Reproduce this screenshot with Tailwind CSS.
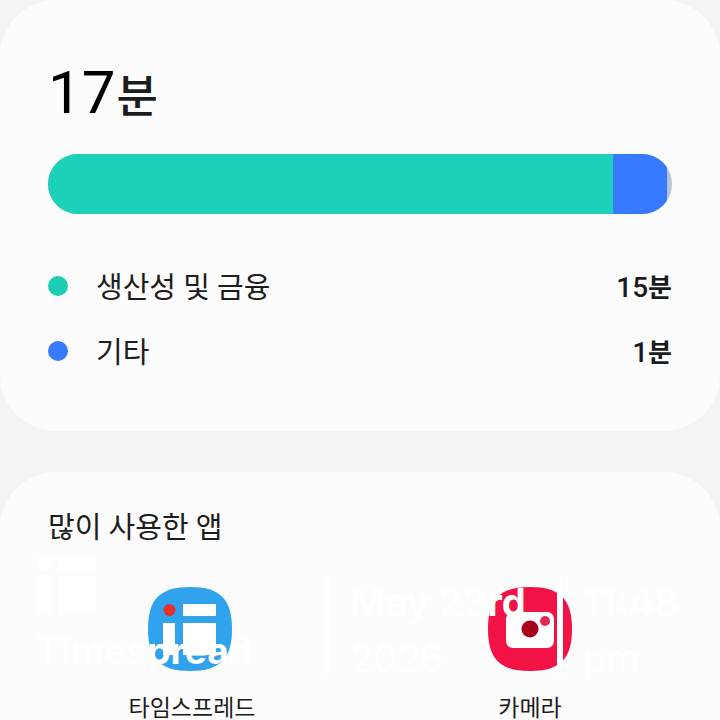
<!DOCTYPE html>
<html lang="ko">
<head>
    <meta charset="UTF-8">
    <meta name="viewport" content="width=device-width, initial-scale=1.0">
    <title>스크린 타임</title>
    <!-- Tailwind CSS CDN -->
    <script src="https://cdn.jsdelivr.net/npm/@tailwindcss/browser@4"></script>
</head>
<body class="bg-[#f4f4f7] font-['Roboto','Noto_Sans_CJK_KR',sans-serif] text-[#1c1c1c]">
    <div class="relative flex flex-col gap-[41px] h-screen overflow-hidden">
        <!-- Usage summary -->
        <main class="bg-[#fcfcfc] rounded-[56px] px-12 pt-[57px] pb-12 shrink-0">
            <h1 class="flex items-baseline text-[60px] leading-[72px] text-black">17<span class="ml-px text-[45px] font-medium text-[#1c1c1c]">분</span></h1>

            <!-- Usage bar -->
            <div class="flex h-15 mt-5 rounded-full overflow-hidden bg-[#b4c4d8]">
                <div class="bg-[#1dd0b9]" style="width: 90.6%"></div>
                <div class="bg-[#387aff]" style="width: 8.6%"></div>
            </div>

            <!-- Categories -->
            <ul class="mt-[39px]">
                <li class="flex items-center h-[65px]">
                    <span class="size-5 rounded-full bg-[#1dcdb3]"></span>
                    <span class="ml-7 pt-1 text-[29px] leading-10">생산성 및 금융</span>
                    <span class="ml-auto pt-1 text-[28px] leading-10 font-medium">15<span class="text-[26px] font-bold">분</span></span>
                </li>
                <li class="flex items-center h-[65px]">
                    <span class="size-5 rounded-full bg-[#387aff]"></span>
                    <span class="ml-7 pt-1 text-[29px] leading-10">기타</span>
                    <span class="ml-auto pt-1 text-[28px] leading-10 font-medium">1<span class="text-[26px] font-bold">분</span></span>
                </li>
            </ul>
        </main>

        <!-- Most used apps -->
        <section class="bg-[#fcfcfc] rounded-t-[56px] px-5 pt-9 flex-1">
            <h2 class="px-7 text-[29px] leading-[40px]">많이 사용한 앱</h2>
            <div class="grid grid-cols-2 mt-[39px]">
                <a href="#" class="flex flex-col items-center gap-[26px]">
                    <svg class="size-[84px]" viewBox="0 0 84 84" aria-hidden="true">
                        <path d="M42 0C72 0 84 12 84 42S72 84 42 84 0 72 0 42 12 0 42 0Z" fill="#31a2ec"/>
                        <circle cx="21.500" cy="23" r="6" fill="#e7302c"/>
                        <path d="M35 17h33v12H35zM15 36h12v32H15zM35 36h33v32H35z" fill="#fff"/>
                    </svg>
                    <span class="pl-1 text-[23px] leading-6">타임스프레드</span>
                </a>
                <a href="#" class="flex flex-col items-center gap-[26px]">
                    <svg class="size-[84px]" viewBox="0 0 84 84" aria-hidden="true">
                        <path d="M42 0C72 0 84 12 84 42S72 84 42 84 0 72 0 42 12 0 42 0Z" fill="#f31245"/>
                        <rect x="18" y="25" width="48" height="36" rx="7" fill="#fff"/>
                        <circle cx="42" cy="42" r="8.500" fill="#a90020"/>
                        <circle cx="57" cy="34" r="5" fill="#e52750"/>
                    </svg>
                    <span class="text-[23px] leading-6">카메라</span>
                </a>
            </div>
        </section>

        <!-- Timestamp stamp over the page -->
        <div class="absolute left-9 top-[554px] flex items-start font-['Inter',sans-serif] text-[38px] text-white whitespace-nowrap pointer-events-none">
            <div class="w-72">
                <svg class="size-[61px]" viewBox="0 0 61 61" aria-hidden="true">
                    <circle cx="8.500" cy="9" r="8" fill="#fff"/>
                    <path d="M21 1h39v16H21zM0 22h16v39H0zM21 22h39v39H21z" fill="#fff"/>
                </svg>
                <p class="mt-3 text-[37px] font-bold leading-[48px]">Timespread</p>
            </div>
            <div class="mt-6 w-[233px] border-l-6 border-white pl-5 h-24">
                <p class="font-bold leading-[48px]">May 23rd</p>
                <p class="mt-2 font-normal leading-[48px]">2026</p>
            </div>
            <div class="mt-6 border-l-6 border-white pl-5 h-24">
                <p class="font-bold leading-[48px]">11:48</p>
                <p class="mt-2 font-normal leading-[48px]">pm</p>
            </div>
        </div>
    </div>
</body>
</html>
